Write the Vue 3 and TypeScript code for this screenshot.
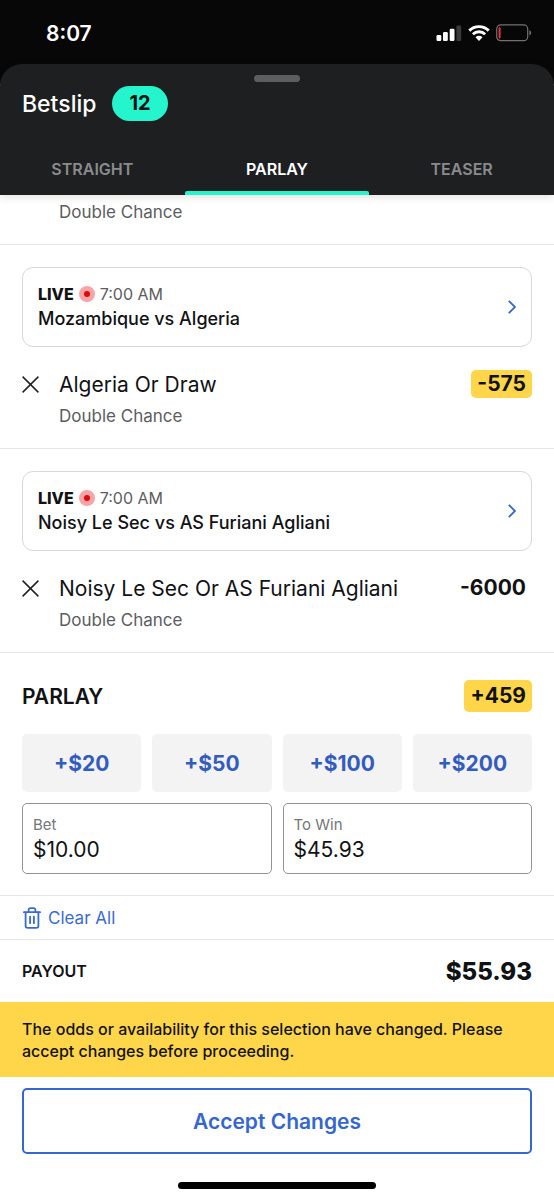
<script setup lang="ts">
import { ref } from 'vue'

interface Selection {
  id: number
  match: string
  time: string
  pick: string
  market: string
  odds: string
  changed: boolean
}

const tabs: string[] = ['STRAIGHT', 'PARLAY', 'TEASER']
const activeTab = ref<string>('PARLAY')

const selections: Selection[] = [
  { id: 1, match: 'Mozambique vs Algeria', time: '7:00 AM', pick: 'Algeria Or Draw', market: 'Double Chance', odds: '-575', changed: true },
  { id: 2, match: 'Noisy Le Sec vs AS Furiani Agliani', time: '7:00 AM', pick: 'Noisy Le Sec Or AS Furiani Agliani', market: 'Double Chance', odds: '-6000', changed: false },
]

const quickStakes: number[] = [20, 50, 100, 200]
const bet = ref<string>('$10.00')
const toWin = ref<string>('$45.93')
</script>

<template>
  <div class="screen">
    <div class="status">
      <span class="clock">8:07</span>
      <div class="indicators">
        <svg class="signal" width="26" height="16" viewBox="0 0 26 16" aria-hidden="true">
          <rect x="0.5" y="10" width="4.8" height="6" rx="1.3" fill="#fff" />
          <rect x="7" y="7" width="4.8" height="9" rx="1.3" fill="#fff" />
          <rect x="13.7" y="3.7" width="4.8" height="12.3" rx="1.3" fill="#fff" />
          <rect x="20.4" y="0.5" width="4.8" height="15.5" rx="1.3" fill="#3a3a3b" />
        </svg>
        <svg class="wifi" width="22" height="16" viewBox="0 0 22 16" aria-hidden="true">
          <g fill="none" stroke="#fff" stroke-width="2.9">
            <path d="M1.3 5.6a13.8 13.8 0 0 1 19.4 0" />
            <path d="M4.9 9.3a8.7 8.7 0 0 1 12.2 0" />
          </g>
          <path d="M7.5 12.2a5 5 0 0 1 7 0L11 16z" fill="#fff" />
        </svg>
        <svg class="battery" width="36" height="18" viewBox="0 0 36 18" aria-hidden="true">
          <rect x="0.7" y="0.9" width="31" height="15.8" rx="4" fill="none" stroke="#717172" stroke-width="1.2" />
          <rect x="2.6" y="3.2" width="2" height="11.2" rx="1" fill="#e0383e" />
          <path d="M33.4 6.2c1.2.5 1.8 1.4 1.8 2.6s-.6 2.1-1.8 2.6z" fill="#717172" />
        </svg>
      </div>
    </div>

    <header class="header">
      <div class="grabber"></div>
      <div class="heading">
        <h1>Betslip</h1>
        <span class="count">12</span>
      </div>
      <nav class="tabs">
        <button
          v-for="tab in tabs"
          :key="tab"
          type="button"
          class="tab"
          :class="{ active: tab === activeTab }"
          @click="activeTab = tab"
        >{{ tab }}</button>
      </nav>
    </header>

    <main>
      <div class="previous">Double Chance</div>

      <section v-for="s in selections" :key="s.id" class="selection">
        <a class="match" href="#">
          <span class="info">
            <span class="meta">
              <b>LIVE</b>
              <span class="dot"></span>
              <span class="time">{{ s.time }}</span>
            </span>
            <span class="teams">{{ s.match }}</span>
          </span>
          <svg width="8" height="14" viewBox="0 0 8 14" aria-hidden="true">
            <path d="M0.8 0.8L7 7L0.8 13.2" fill="none" stroke="#3567cf" stroke-width="1.8" />
          </svg>
        </a>
        <div class="pick">
          <button type="button" class="remove" :aria-label="'Remove ' + s.pick">
            <svg width="17" height="17" viewBox="0 0 17 17" aria-hidden="true">
              <path d="M0.6 0.6L16.4 16.4M16.4 0.6L0.6 16.4" fill="none" stroke="#222" stroke-width="1.5" />
            </svg>
          </button>
          <span class="name">{{ s.pick }}</span>
          <span class="odds" :class="{ changed: s.changed }">{{ s.odds }}</span>
        </div>
        <div class="market">{{ s.market }}</div>
      </section>

      <section class="parlay">
        <div class="parlay-head">
          <h2>PARLAY</h2>
          <span class="odds changed total">+459</span>
        </div>
        <div class="stakes">
          <button v-for="q in quickStakes" :key="q" type="button">+${{ q }}</button>
        </div>
        <div class="fields">
          <label class="field">
            <span>Bet</span>
            <input v-model="bet" type="text" inputmode="decimal" />
          </label>
          <label class="field">
            <span>To Win</span>
            <input v-model="toWin" type="text" inputmode="decimal" />
          </label>
        </div>
      </section>
    </main>

    <div class="clear-row">
      <button type="button" class="clear">
        <svg width="18" height="22" viewBox="0 0 18 22" aria-hidden="true">
          <g fill="none" stroke="#3a6bd3" stroke-width="1.8" stroke-linecap="round" stroke-linejoin="round">
            <path d="M0.9 5.2H17.1" />
            <path d="M5.6 5V3.2Q5.6 1.2 7.6 1.2H10.4Q12.4 1.2 12.4 3.2V5" />
            <path d="M2.6 5.4V18.7Q2.6 20.8 4.7 20.8H13.3Q15.4 20.8 15.4 18.7V5.4" />
            <path d="M7.1 9.6V16.2M10.9 9.6V16.2" />
          </g>
        </svg>
        <span>Clear All</span>
      </button>
    </div>

    <div class="payout">
      <span class="payout-label">PAYOUT</span>
      <span class="payout-value">$55.93</span>
    </div>

    <p class="notice" role="status">The odds or availability for this selection have changed. Please accept changes before proceeding.</p>

    <footer class="footer">
      <button type="button" class="accept">Accept Changes</button>
      <div class="home"></div>
    </footer>
  </div>
</template>

<style>
body {
  background: #fff;
}
</style>

<style scoped>
.screen {
  font-family: Inter, "Liberation Sans", sans-serif;
  color: #111214;
  background: #fff;
  min-height: 100vh;
}
.screen * {
  box-sizing: border-box;
}
button,
input {
  font-family: inherit;
  margin: 0;
  padding: 0;
  border: 0;
  background: none;
}
h1,
h2,
p {
  margin: 0;
}
svg {
  display: block;
  flex: none;
}
.status {
  display: flex;
  align-items: center;
  justify-content: space-between;
  height: 84px;
  margin-bottom: -20px;
  padding: 0 22px 18px 46px;
  background: #070707;
  color: #fff;
}
.clock {
  font-size: 21px;
  font-weight: 600;
}
.indicators {
  display: flex;
  align-items: center;
  gap: 6px;
}
.header {
  position: relative;
  background: #1e1f21;
  border-radius: 22px 22px 0 0;
  padding-top: 11px;
  box-shadow: 0 2px 8px rgba(60, 40, 30, 0.14);
}
.grabber {
  width: 46px;
  height: 7px;
  margin: 0 auto;
  border-radius: 4px;
  background: #5d5e60;
}
.heading {
  display: flex;
  align-items: center;
  gap: 16px;
  height: 35px;
  margin: 4px 22px 0;
}
h1 {
  font-size: 23px;
  font-weight: 500;
  color: #fff;
}
.count {
  padding: 0 17px;
  border-radius: 18px;
  background: #24f5cd;
  font-size: 20px;
  line-height: 35px;
  font-weight: 700;
}
.tabs {
  display: flex;
  margin-top: 22px;
}
.tab {
  position: relative;
  flex: 1;
  height: 52px;
  color: #8a8b8d;
  font-size: 16px;
  font-weight: 600;
}
.tab.active {
  color: #fff;
}
.tab.active::after {
  content: "";
  position: absolute;
  left: 0;
  right: 0;
  bottom: 0;
  height: 4px;
  border-radius: 2px 2px 0 0;
  background: #24f5cd;
}
.previous {
  padding: 6px 22px 21px 59px;
  border-bottom: 1px solid #e6e6e7;
  color: #5c5d60;
  font-size: 17px;
  line-height: 22px;
}
.selection {
  padding: 22px 22px 21px;
  border-bottom: 1px solid #e6e6e7;
}
.match {
  display: flex;
  align-items: center;
  justify-content: space-between;
  height: 80px;
  padding: 0 15px;
  border: 1px solid #d8d8da;
  border-radius: 11px;
  color: inherit;
  text-decoration: none;
}
.info {
  display: flex;
  flex-direction: column;
}
.meta {
  display: flex;
  align-items: center;
  gap: 5px;
  font-size: 16px;
  line-height: 24px;
}
.meta b {
  font-weight: 800;
}
.time {
  color: #5c5d60;
}
.dot {
  width: 16px;
  height: 16px;
  border: 5px solid #f8a3a5;
  border-radius: 50%;
  background: #dc0a0a;
}
.teams {
  font-size: 18px;
  line-height: 26px;
  font-weight: 500;
}
.pick {
  display: flex;
  align-items: center;
  height: 32px;
  margin-top: 21px;
}
.remove {
  width: 37px;
  height: 32px;
}
.name {
  flex: 1;
  font-size: 21px;
}
.odds {
  padding: 0 6px;
  border-radius: 5px;
  font-size: 21px;
  line-height: 28px;
  font-weight: 700;
}
.changed {
  background: #ffd649;
}
.total {
  line-height: 32px;
}
.market {
  margin: 5px 0 0 37px;
  color: #5c5d60;
  font-size: 17px;
  line-height: 22px;
}
.parlay {
  padding: 27px 22px 21px;
}
.parlay-head {
  display: flex;
  align-items: center;
  justify-content: space-between;
}
h2 {
  font-size: 21px;
  font-weight: 600;
}
.stakes {
  display: grid;
  grid-template-columns: repeat(4, 1fr);
  gap: 11px;
  margin-top: 22px;
}
.stakes button {
  height: 58px;
  border-radius: 5px;
  background: #f3f3f4;
  color: #335cbf;
  font-size: 21px;
  font-weight: 700;
}
.fields {
  display: grid;
  grid-template-columns: 1fr 1fr;
  gap: 11px;
  margin-top: 11px;
}
.field {
  display: flex;
  flex-direction: column;
  height: 71px;
  padding: 10px;
  border: 1px solid #939395;
  border-radius: 5px;
}
.field span {
  color: #757679;
  font-size: 15px;
  line-height: 22px;
}
.field input {
  width: 100%;
  height: 26px;
  color: #111214;
  font-size: 21px;
}
.clear-row {
  border-top: 1px solid #e6e6e7;
  border-bottom: 1px solid #e6e6e7;
  padding: 0 23px;
}
.clear {
  display: flex;
  align-items: center;
  gap: 7px;
  height: 43px;
  color: #3a6bd3;
  font-size: 17px;
}
.payout {
  display: flex;
  align-items: center;
  justify-content: space-between;
  height: 62px;
  padding: 0 22px;
}
.payout-label {
  font-size: 16px;
  font-weight: 600;
}
.payout-value {
  font-size: 24px;
  font-weight: 800;
}
.notice {
  padding: 16px 22px 15px;
  background: #ffd649;
  font-size: 16px;
  line-height: 22px;
  font-weight: 500;
}
.footer {
  padding: 11px 22px;
}
.accept {
  display: block;
  width: 100%;
  height: 66px;
  border: 2px solid #3567cf;
  border-radius: 5px;
  color: #3567cf;
  font-size: 21px;
  font-weight: 600;
}
.home {
  width: 198px;
  height: 7px;
  margin: 28px auto 0;
  border-radius: 4px;
  background: #000;
}
</style>
